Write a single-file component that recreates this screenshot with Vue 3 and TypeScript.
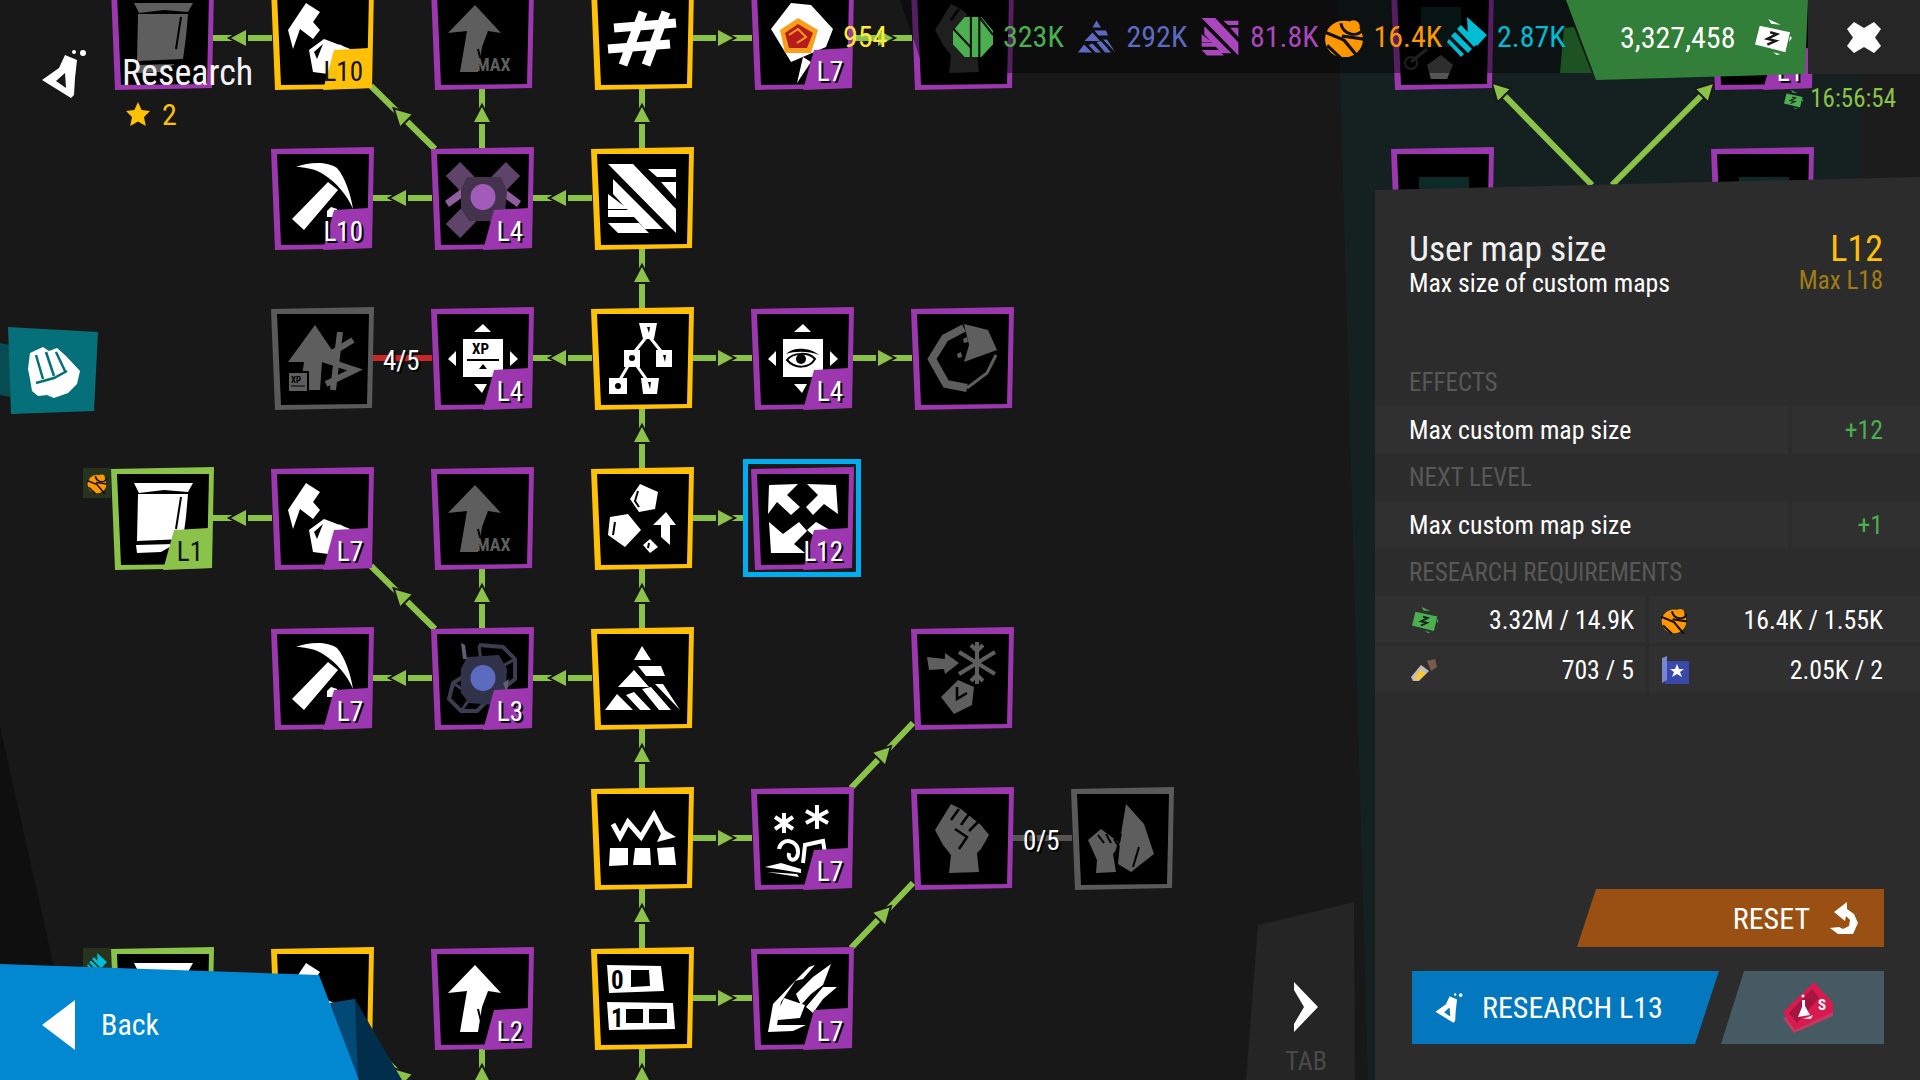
<template>
  <div class="screen">
    <div class="wedge"></div>
    <div class="teal"></div>
    <div class="side"></div>

    <!-- research tree -->
    <svg class="edges" viewBox="0 0 1920 1130" width="1920" height="1130">
      <g v-for="(e, i) in edges" :key="i">
        <line :x1="e.x1" :y1="e.y1" :x2="e.x2" :y2="e.y2" :stroke="e.color" stroke-width="6" />
        <template v-if="e.head">
          <polygon :points="e.head" fill="#181818" stroke="#181818" stroke-width="4" />
          <polygon :points="e.head" fill="#8bc34a" />
        </template>
      </g>
    </svg>
    <div
      v-for="n in nodes"
      :key="n.c + '-' + n.r"
      class="node"
      :class="{ selected: n.sel }"
      :style="{ left: 111 + n.c * 160 + 'px', top: -13 + n.r * 160 + 'px' }"
    >
      <svg viewBox="0 0 103 103" width="103" height="103">
        <polygon points="0,2 103,0 101,101 4,103" :fill="tones[n.tone]" />
        <polygon points="6,7 98,7 96,97 10,98" fill="#000" />
        <Glyph :name="n.icon" :color="n.fg || '#fff'" />
        <polygon v-if="n.lvl" points="63,63 98,61 101,101 52,103" :fill="tones[n.tone]" />
      </svg>
      <span v-if="n.lvl" class="lvl" :class="{ dark: n.tone === 'yellow' || n.tone === 'green' }">{{ n.lvl }}</span>
    </div>
    <span class="link-count count-a">4/5</span>
    <span class="link-count count-b">0/5</span>
    <div class="mini mini-a">
      <svg viewBox="0 0 38 38" width="20" height="22"><Glyph name="sOrange" color="#ff9800" /></svg>
    </div>
    <div class="mini mini-b">
      <svg viewBox="0 0 40 40" width="20" height="22"><Glyph name="sCyan" color="#00bcd4" /></svg>
    </div>

    <!-- left side -->
    <div class="title-block">
      <svg viewBox="0 0 48 52" width="48" height="52"><Glyph name="flask" color="#fff" /></svg>
      <div class="title-text">
        <div class="title">Research</div>
        <div class="stars">
          <svg viewBox="0 0 24 24" width="26" height="24"><path fill="#ffc107" d="M12 0l3.600 8 8.400 1-6 6 1.800 9L12 19.500 4.200 24 6 15 0 9l8.400-1z" /></svg>
          <span>2</span>
        </div>
      </div>
    </div>
    <svg class="group-tab" viewBox="0 0 100 90" width="100" height="90">
      <polygon points="0,16 10,18 10,70 0,68" fill="#074c52" />
      <polygon points="8,0 98,5 94,84 11,87" fill="#06707a" />
      <path fill="#fff" d="M30 26l13-6 6 4 8-3 9 8 14 15-3 13-9 9-14 5-7-3-9 1-6-5-2-12-2-10z" />
      <path fill="none" stroke="#06707a" stroke-width="2.500" d="M36 28l7 24M46 25l8 24M56 25l9 19M36 56l18-5 13-7" />
    </svg>
    <div class="back">
      <svg class="back-bg" viewBox="0 0 402 116" width="402" height="116">
        <polygon points="330,39 355,35 402,116 360,116" fill="#012f4b" />
        <polygon points="330,39 355,35 358,116 345,116" fill="#024a75" />
        <polygon points="0,0 319,11 359,116 0,116" fill="#0288d1" />
      </svg>
      <svg class="back-arrow" viewBox="0 0 33 50" width="33" height="50"><polygon points="33,0 0,25 33,50" fill="#fff" /></svg>
      <span>Back</span>
    </div>
    <div class="tab">
      <svg viewBox="0 0 24 50" width="24" height="50"><polygon points="0,0 24,25 0,50 0,42 10,25 0,8" fill="#fff" /></svg>
      <span>TAB</span>
    </div>

    <!-- top bar -->
    <div class="bar-bg"></div>
    <div class="flag-shadow"></div>
    <div class="topbar">
      <span class="gold">954</span>
      <div v-for="s in stats" :key="s.value" class="stat" :style="{ color: s.color }">
        <svg :viewBox="s.box" width="40" height="40"><Glyph :name="s.icon" :color="s.color" /></svg>
        <span>{{ s.value }}</span>
      </div>
    </div>
    <div class="flag">
      <span>3,327,458</span>
      <svg viewBox="0 0 40 38" width="38" height="36"><Glyph name="bills" color="#fff" /></svg>
    </div>
    <div class="close">
      <svg viewBox="0 0 34 31" width="34" height="31"><polygon points="7,0 17,6 27,0 34,7 28,15.500 34,24 27,31 17,25 7,31 0,24 6,15.500 0,7" fill="#fff" /></svg>
    </div>
    <div class="timer">
      <svg viewBox="0 0 40 38" width="21" height="19"><Glyph name="bills" color="#4caf50" /></svg>
      <span>16:56:54</span>
    </div>

    <!-- details panel -->
    <aside class="panel">
      <header class="head">
        <div>
          <div class="name">User map size</div>
          <div class="desc">Max size of custom maps</div>
        </div>
        <div class="levels">
          <div class="cur">L12</div>
          <div class="max">Max L18</div>
        </div>
      </header>
      <div class="section first">EFFECTS</div>
      <div class="row"><div class="cell">Max custom map size</div><div class="cell val">+12</div></div>
      <div class="section">NEXT LEVEL</div>
      <div class="row"><div class="cell">Max custom map size</div><div class="cell val">+1</div></div>
      <div class="section">RESEARCH REQUIREMENTS</div>
      <div class="req">
        <div class="req-cell">
          <svg viewBox="0 0 40 38" width="28" height="26"><Glyph name="bills" color="#4caf50" /></svg>
          <span>3.32M / 14.9K</span>
        </div>
        <div class="req-cell right">
          <svg viewBox="0 0 38 38" width="26" height="28"><Glyph name="sOrange" color="#ff9800" /></svg>
          <span>16.4K / 1.55K</span>
        </div>
        <div class="req-cell">
          <svg viewBox="0 0 26 26" width="26" height="26"><Glyph name="vial" color="#ffca28" /></svg>
          <span>703 / 5</span>
        </div>
        <div class="req-cell right">
          <svg viewBox="0 0 28 28" width="28" height="28"><Glyph name="chart" color="#3949ab" /></svg>
          <span>2.05K / 2</span>
        </div>
      </div>
      <div class="actions">
        <button class="reset">
          <span>RESET</span>
          <svg viewBox="0 0 28 32" width="28" height="32"><path fill="#fff" d="M4 10L17 0v7l7 5 4 9-5 11H8L0 26l9-1 4 2 6-3 1-6-4-4-1 5z" /></svg>
        </button>
        <div class="action-row">
          <button class="research">
            <svg viewBox="0 0 48 52" width="30" height="32"><Glyph name="flask" color="#fff" /></svg>
            <span>RESEARCH L13</span>
          </button>
          <button class="ticket">
            <svg viewBox="0 0 52 52" width="52" height="52"><Glyph name="ticket" color="#d81b4f" /></svg>
          </button>
        </div>
      </div>
    </aside>
  </div>
</template>

<script setup lang="ts">
import { h } from "vue";

type Shape = {
  d?: string;
  fill?: string;
  stroke?: string;
  w?: number;
  even?: boolean;
  text?: string;
  x?: number;
  y?: number;
  size?: number;
};

type TreeNode = {
  c: number;
  r: number;
  tone: "purple" | "yellow" | "green" | "gray";
  icon: string;
  lvl?: string;
  fg?: string;
  sel?: boolean;
};

const BLACK = "#000";
const GRAY = "#5e5e5e";

const poly = (...list: string[]) =>
  list.map((s) => "M" + s.trim().split(" ").join("L") + "Z").join("");
const oval = (x: number, y: number, rx: number, ry = rx) =>
  `M${x - rx} ${y}a${rx} ${ry} 0 1 0 ${rx * 2} 0a${rx} ${ry} 0 1 0 ${-rx * 2} 0Z`;

const card = poly(
  "52,17 60,25 43,25",
  "32,32 72,32 72,70 32,70",
  "25,44 17,52 25,59",
  "79,44 87,52 79,59",
  "43,77 56,77 51,86"
);
const upArrow = poly("44,18 70,46 57,44 51,60 47,85 29,85 36,44 17,46");

const icons: Record<string, Shape[]> = {
  scroll: [
    { d: poly("23,16 82,16 77,25 53,23 28,26", "27,27 77,27 75,50 72,72 26,74", "25,78 64,77 50,85 26,86") },
    { d: "M70 30L65 62", stroke: BLACK, w: 2 },
  ],
  hammer: [
    { d: poly("35,16 49,25 42,35 49,43 42,52 29,42 22,62 17,43", "38,63 53,52 82,63 80,90 42,85", "68,57 78,62 72,62") },
    { d: poly("43,65 52,57 46,72"), fill: BLACK },
  ],
  pick: [
    { d: "M25 20C38 15 56 14 66 21C74 30 80 48 82 62C76 48 66 36 52 27C44 22 34 20 25 20Z" },
    { d: poly("57,35 67,43 33,83 21,72", "56,64 60,60 66,62 66,70 56,70") },
  ],
  arrow: [
    { d: upArrow },
    { d: "M47 62L50 74", stroke: BLACK, w: 2 },
    { text: "MAX", x: 45, y: 84, size: 18 },
  ],
  arrowUp: [{ d: upArrow }, { d: "M47 62L50 74", stroke: BLACK, w: 2 }],
  hash: [{ d: "M23 41L85 36M17 62L79 57M52 25L32 78M75 25L55 78", stroke: "fg", w: 9 }],
  stripes: [
    {
      d: poly(
        "17,17 42,17 85,62 85,86",
        "22,32 72,82 54,82 22,47",
        "57,22 85,22 85,30 66,30",
        "70,35 85,35 85,52",
        "17,47 37,62 17,62",
        "17,63 39,63 46,70 17,70",
        "17,76 48,76 58,86 27,86"
      ),
    },
  ],
  xp: [
    { d: card },
    { text: "XP", x: 41, y: 47, size: 15, fill: BLACK },
    { d: "M36 53H68", stroke: BLACK, w: 2 },
    { d: poly("52,57 56,62 48,62"), fill: BLACK },
  ],
  eye: [
    { d: card },
    { d: "M35 47C42 40 58 40 68 48C58 44 44 44 35 47Z", fill: BLACK },
    { d: "M36 53C42 45 58 45 64 52C58 62 44 62 36 53Z", stroke: BLACK, w: 2 },
    { d: oval(50, 52, 5), fill: BLACK },
  ],
  tree: [
    { d: "M57 28L41 48M57 28L73 48M41 52L27 76M41 52L58 76", stroke: "fg", w: 3 },
    {
      d: poly(
        "48,16 66,16 63,32 52,32",
        "33,43 49,43 49,60 33,60",
        "65,43 81,43 81,60 65,60",
        "18,71 36,71 36,87 18,87",
        "50,71 68,71 66,87 52,87"
      ),
    },
    { d: oval(41, 51, 3) + oval(27, 79, 3) + poly("56,20 59,20 58,26", "72,48 75,48 74,55", "57,75 60,75 59,82"), fill: BLACK },
  ],
  pacman: [
    { d: "M53 21L34 31L21 52L35 77L56 81", stroke: "fg", w: 8 },
    { d: "M56 81L76 66L85 48", stroke: "fg", w: 3 },
    { d: poly("53,17 77,23 86,43 53,55 58,38") },
    { d: poly("52,32 56,30 57,35 53,36", "46,47 50,45 51,50 47,51"), fill: GRAY },
  ],
  rocks: [
    { d: poly("49,17 67,25 64,42 48,45 39,32", "19,50 37,47 50,63 34,80 17,68", "59,72 67,80 59,86 52,78", "75,45 85,58 79,58 79,78 70,70 70,58 62,58") },
    { d: "M47 24L44 34L48 40M24 55L22 68M58 76L57 81", stroke: BLACK, w: 2 },
  ],
  expand: [
    {
      d: poly(
        "18,18 47,17 36,28 49,40 40,48 26,35 17,47",
        "56,17 85,18 87,47 73,37 62,48 55,40 67,28",
        "18,55 32,67 48,55 56,64 43,77 54,86 20,86",
        "56,63 65,55 79,63 70,75"
      ),
    },
  ],
  tower: [
    {
      d: poly(
        "51,19 60,33 43,33",
        "47,39 70,39 74,49 55,49",
        "43,43 58,60 27,60",
        "26,67 42,83 14,83",
        "35,68 43,65 60,83 49,83",
        "51,62 60,60 80,83 68,83",
        "64,57 72,57 89,83"
      ),
    },
  ],
  snow: [
    { d: poly("16,30 34,32 34,26 48,36 34,47 33,42 18,43", "47,53 63,60 61,78 43,87 30,70") },
    { d: "M66 15V57M48 25L84 47M48 47L84 25M60 18L66 24L72 18M60 54L66 48L72 54", stroke: "fg", w: 4 },
    { d: "M46 60V72L56 66", stroke: BLACK, w: 2.500 },
  ],
  fist: [
    { d: poly("24,43 40,17 50,22 60,30 70,38 78,48 70,62 66,66 68,85 38,86 40,68 32,58") },
    { d: "M40 33L48 22M50 38L58 27M58 44L68 34M44 42L56 50L48 62", stroke: BLACK, w: 2.500 },
  ],
  flame: [
    { d: poly("55,17 73,37 83,67 60,85 47,77 50,47", "17,53 30,42 50,57 42,67 45,85 25,86 26,73") },
    { d: "M27 48L33 56M35 47L40 56M43 52L48 60M50 47L44 70M68 60L62 80", stroke: BLACK, w: 2 },
  ],
  xpTrade: [
    { d: poly("44,18 69,55 51,55 49,83 29,83 33,55 17,55") },
    { d: "M69 25L62 83M82 33L51 52L84 63L55 77", stroke: "fg", w: 6 },
    { d: poly("15,64 38,64 38,86 15,86"), fill: BLACK },
    { d: poly("18,66 36,66 36,84 18,84") },
    { text: "XP", x: 20, y: 76, size: 9, fill: BLACK },
    { d: "M20 79H34", stroke: BLACK, w: 1 },
  ],
  crown: [
    { d: "M22 37L29 50L37 35L50 50L63 28L73 47", stroke: "fg", w: 5 },
    { d: poly("72,42 85,50 66,55", "19,61 37,61 37,78 18,79", "44,61 59,61 60,78 42,78", "66,61 83,60 85,78 68,78") },
  ],
  wind: [
    { d: "M33 26V46M24 30L42 42M24 42L42 30M66 18V42M55 24L77 36M55 36L77 24", stroke: "fg", w: 4 },
    { d: "M28 62C30 50 48 52 47 66C46 76 36 74 38 66M52 76L54 58L72 54L74 66", stroke: "fg", w: 4 },
    { d: poly("14,80 30,76 50,82 50,86", "16,85 46,87 48,90") },
  ],
  numbers: [
    { d: poly("16,18 70,19 73,44 18,46", "16,55 82,56 84,82 18,83") },
    { text: "0", x: 20, y: 42, size: 25, fill: BLACK },
    { text: "1", x: 20, y: 80, size: 25, fill: BLACK },
    { d: poly("40,23 58,23 59,39 40,40", "35,62 52,62 52,76 35,76", "58,62 76,62 76,76 58,76"), fill: BLACK },
  ],
  claw: [
    {
      d: poly(
        "17,85 22,57 45,33 30,55 26,78 55,78 42,84",
        "33,51 54,58 49,71 27,73 29,60",
        "45,47 62,30 80,17 72,38 60,47 50,58",
        "55,60 72,40 86,40 72,52 62,66",
        "44,34 58,20 64,18 52,32"
      ),
    },
  ],
  devicePurple: [
    { d: "M22 22L82 84M82 22L22 84", stroke: "#5d4468", w: 20 },
    { d: poly("14,54 30,42 32,50 18,60", "90,54 74,42 72,50 86,60"), fill: "#8e5e9e" },
    { d: poly("36,30 70,30 76,44 74,66 66,74 38,74 30,62 30,42"), fill: "#44324f" },
    { d: oval(52, 50, 12.500, 13), fill: "#a05cb8" },
  ],
  deviceBlue: [
    { d: "M48 18L72 20L84 32L84 52L72 62M38 46L22 56L18 72L30 84L46 84L56 74", stroke: "#3a3d50", w: 4 },
    { d: "M48 18L50 36M84 32L70 40M22 56L34 64M30 84L40 70", stroke: "#3a3d50", w: 3 },
    { d: poly("36,30 68,28 76,42 74,70 64,78 38,76 30,66 30,42"), fill: "#30334a" },
    { d: poly("30,16 34,18 36,32 32,32", "72,56 78,52 76,66"), fill: "#5a6078" },
    { d: oval(52, 51, 12.500, 13), fill: "#5c6bc0" },
  ],
  flameRock: [
    { d: poly("40,16 60,18 82,42 75,60 40,75 20,42", "52,70 60,75 46,96") },
    { d: poly("47,31 67,43 60,66 34,66 29,43"), fill: "#f9a01b" },
    { d: poly("47,37 62,46 56,61 38,61 34,46"), fill: "#b71c1c" },
    { d: "M38 48L47 42L55 50L46 56", stroke: "#f9a01b", w: 2 },
  ],
  branch: [
    { d: "M20 75L36 62", stroke: "#3a3a3a", w: 3 },
    { d: oval(20, 76, 6), stroke: "#3a3a3a", w: 2 },
    { d: poly("36,78 50,68 62,78 56,92 40,92"), fill: "#555" },
    { d: "M30 20H70V60H30Z", fill: "#0c2624" },
  ],
  teal: [{ d: "M28 30H78V90H28Z", fill: "#0c2a28" }],
  sGreen: [
    { d: poly("11,0 27,0 38,13 38,26 27,38 11,38 0,26 0,13") },
    { d: "M0 11L17 29M17 0V38M25 0V38M25 0L38 17", stroke: "#101010", w: 2 },
  ],
  sOrange: [
    { d: oval(19, 21, 18, 17.500) },
    { d: "M0 14L19 22L34 40M3 27L16 39M17 18L38 21", stroke: "#101010", w: 3 },
    { d: "M16 6C18 18 34 20 38 10", stroke: "#101010", w: 3 },
    { d: oval(28, 9, 6) },
  ],
  sCyan: [
    { d: poly("20,0 40,18 30,29 21,19", "14,8 31,26 27,30 10,12", "8,15 25,32 21,36 4,19", "2,22 17,37 14,40 0,25") },
  ],
  bills: [
    { d: poly("6,7 38,14 33,35 1,27", "15,0 28,6 18,5", "38,18 40,20 37,24", "20,35 28,37 24,38") },
    { d: "M17 14L24 16L14 21L23 23L14 27", stroke: "#181818", w: 2.500 },
  ],
  flask: [
    {
      d: poly("25,7 37,12 35,30 34,47 31,50 2,32 19,20", "16,33 26,40 25,25") + oval(43, 5, 3) + oval(34, 4, 2),
      even: true,
    },
  ],
  vial: [
    { d: poly("16,4 24,2 26,10 20,14"), fill: "#7b5a4c" },
    { d: poly("10,8 18,14 8,24 2,24 0,20"), fill: "#bdbdbd" },
    { d: poly("9,13 15,16 7,23 3,22"), fill: "#ffca28" },
  ],
  chart: [
    { d: "M4 5H28V28H4Z" },
    { d: "M1 2L6 0V24L1 27Z", fill: "#7986cb" },
    { d: poly("16,8 18,13 23,13 19,16 21,21 16,18 11,21 13,16 9,13 14,13"), fill: "#fff" },
  ],
  ticket: [
    { d: poly("11,51 0,36 50,20 50,34"), fill: "#c43a62" },
    { d: poly("0,30 31,0 50,21 50,30 12,48") },
    { d: poly("6,31 29,7 36,16 14,41"), fill: "#a5153f" },
    { d: poly("19,18 22,18 22,24 27,33 15,35 19,25") + oval(20, 14, 1.500), fill: "#fff" },
    { d: poly("20,37 30,33 28,37"), fill: "#ddd" },
    { text: "S", x: 35, y: 28, size: 15, fill: "#fff" },
  ],
};

// small functional component, draws one icon inside an svg
const Glyph = (props: { name: string; color: string }) =>
  h(
    "g",
    (icons[props.name] || []).map((s) => {
      if (s.text) {
        return h(
          "text",
          {
            x: s.x,
            y: s.y,
            fill: s.fill || props.color,
            "font-size": s.size,
            "font-weight": 700,
            "font-family": "Roboto, sans-serif",
          },
          s.text
        );
      }
      if (s.stroke) {
        return h("path", {
          d: s.d,
          fill: "none",
          stroke: s.stroke === "fg" ? props.color : s.stroke,
          "stroke-width": s.w,
        });
      }
      return h("path", {
        d: s.d,
        fill: s.fill || props.color,
        "fill-rule": s.even ? "evenodd" : "nonzero",
      });
    })
  );

const tones = { purple: "#9c37b0", yellow: "#ffc107", green: "#8bc34a", gray: "#5a5a5a" };

const nodes: TreeNode[] = [
  { c: 0, r: 0, tone: "purple", icon: "scroll", fg: GRAY },
  { c: 1, r: 0, tone: "yellow", icon: "hammer", lvl: "L10" },
  { c: 2, r: 0, tone: "purple", icon: "arrow", fg: GRAY },
  { c: 3, r: 0, tone: "yellow", icon: "hash" },
  { c: 4, r: 0, tone: "purple", icon: "flameRock", lvl: "L7" },
  { c: 5, r: 0, tone: "purple", icon: "fist", fg: "#3a3a3a" },
  { c: 8, r: 0, tone: "purple", icon: "branch" },
  { c: 10, r: 0, tone: "purple", icon: "scroll", lvl: "L1" },
  { c: 8, r: 1, tone: "purple", icon: "teal" },
  { c: 10, r: 1, tone: "purple", icon: "teal" },
  { c: 1, r: 1, tone: "purple", icon: "pick", lvl: "L10" },
  { c: 2, r: 1, tone: "purple", icon: "devicePurple", lvl: "L4" },
  { c: 3, r: 1, tone: "yellow", icon: "stripes" },
  { c: 1, r: 2, tone: "gray", icon: "xpTrade", fg: GRAY },
  { c: 2, r: 2, tone: "purple", icon: "xp", lvl: "L4" },
  { c: 3, r: 2, tone: "yellow", icon: "tree" },
  { c: 4, r: 2, tone: "purple", icon: "eye", lvl: "L4" },
  { c: 5, r: 2, tone: "purple", icon: "pacman", fg: GRAY },
  { c: 0, r: 3, tone: "green", icon: "scroll", lvl: "L1" },
  { c: 1, r: 3, tone: "purple", icon: "hammer", lvl: "L7" },
  { c: 2, r: 3, tone: "purple", icon: "arrow", fg: GRAY },
  { c: 3, r: 3, tone: "yellow", icon: "rocks" },
  { c: 4, r: 3, tone: "purple", icon: "expand", lvl: "L12", sel: true },
  { c: 1, r: 4, tone: "purple", icon: "pick", lvl: "L7" },
  { c: 2, r: 4, tone: "purple", icon: "deviceBlue", lvl: "L3" },
  { c: 3, r: 4, tone: "yellow", icon: "tower" },
  { c: 5, r: 4, tone: "purple", icon: "snow", fg: GRAY },
  { c: 3, r: 5, tone: "yellow", icon: "crown" },
  { c: 4, r: 5, tone: "purple", icon: "wind", lvl: "L7" },
  { c: 5, r: 5, tone: "purple", icon: "fist", fg: GRAY },
  { c: 6, r: 5, tone: "gray", icon: "flame", fg: GRAY },
  { c: 0, r: 6, tone: "green", icon: "scroll" },
  { c: 1, r: 6, tone: "yellow", icon: "hammer" },
  { c: 2, r: 6, tone: "purple", icon: "arrowUp", lvl: "L2" },
  { c: 3, r: 6, tone: "yellow", icon: "numbers" },
  { c: 4, r: 6, tone: "purple", icon: "claw", lvl: "L7" },
];

const GREEN = "#8bc34a";
const cx = (c: number) => 162 + c * 160;
const cy = (r: number) => 38 + r * 160;
const left = (c: number) => 111 + c * 160;
const top = (r: number) => -13 + r * 160;

const link = (x1: number, y1: number, x2: number, y2: number, t = 0.5, color = GREEN) => {
  const len = Math.hypot(x2 - x1, y2 - y1);
  const ux = (x2 - x1) / len;
  const uy = (y2 - y1) / len;
  const mx = x1 + (x2 - x1) * t;
  const my = y1 + (y2 - y1) * t;
  const bx = mx - ux * 4;
  const by = my - uy * 4;
  const head =
    t > 0
      ? [
          [bx - uy * 8, by + ux * 8],
          [mx + ux * 11, my + uy * 11],
          [bx + uy * 8, by - ux * 8],
        ]
          .map((p) => p.join(","))
          .join(" ")
      : "";
  return { x1, y1, x2, y2, color, head };
};
// horizontal link on row r, between two neighbour columns
const across = (r: number, a: number, b: number) =>
  a < b ? link(cx(a) + 50, cy(r), cx(b) - 50, cy(r)) : link(cx(a) - 50, cy(r), cx(b) + 50, cy(r));
const upward = (c: number, r: number) => link(cx(c), top(r) + 1, cx(c), top(r - 1) + 101);
const diagLeft = (c: number, r: number) =>
  link(left(c) + 4, top(r) + 2, left(c - 1) + 100, top(r - 1) + 99);
const diagRight = (c: number, r: number) =>
  link(left(c) + 100, top(r) + 1, left(c + 1) + 2, top(r - 1) + 96);

const edges = [
  across(0, 1, 0),
  across(0, 3, 4),
  across(0, 4, 5),
  upward(3, 1),
  upward(2, 1),
  diagLeft(2, 1),
  across(1, 2, 1),
  across(1, 3, 2),
  upward(3, 2),
  link(cx(1) + 50, cy(2), cx(2) - 50, cy(2), 0, "#c62828"),
  across(2, 3, 2),
  across(2, 3, 4),
  across(2, 4, 5),
  upward(3, 3),
  across(3, 1, 0),
  across(3, 3, 4),
  upward(3, 4),
  upward(2, 4),
  diagLeft(2, 4),
  across(4, 2, 1),
  across(4, 3, 2),
  upward(3, 5),
  across(5, 3, 4),
  diagRight(4, 5),
  link(cx(5) + 50, cy(5), cx(6) - 50, cy(5), 0, "#555"),
  upward(3, 6),
  across(6, 3, 4),
  diagRight(4, 6),
  upward(2, 7),
  upward(3, 7),
  diagLeft(2, 7),
  link(1592, 185, 1494, 85, 0.93),
  link(1612, 185, 1712, 85, 0.93),
];

const stats = [
  { icon: "sGreen", box: "0 0 38 38", value: "323K", color: "#4caf50" },
  { icon: "tower", box: "12 16 80 72", value: "292K", color: "#5c6bc0" },
  { icon: "stripes", box: "15 15 72 74", value: "81.8K", color: "#ab47bc" },
  { icon: "sOrange", box: "0 0 38 38", value: "16.4K", color: "#ff9800" },
  { icon: "sCyan", box: "0 0 40 40", value: "2.87K", color: "#00bcd4" },
];
</script>

<style>
html,
body {
  margin: 0;
  background: #181818;
}
</style>

<style scoped>
.screen {
  position: relative;
  width: 1920px;
  height: 1080px;
  overflow: hidden;
  background: #181818;
  color: #fff;
  font-family: "Roboto Condensed", Roboto, "Liberation Sans", sans-serif;
  font-stretch: 85%;
  font-weight: 400;
}
.wedge {
  position: absolute;
  left: 0;
  top: 727px;
  width: 60px;
  height: 353px;
  background: #0f0f0f;
  clip-path: polygon(0 0, 54px 240px, 100% 100%, 0 100%);
}
.teal {
  position: absolute;
  left: 1338px;
  top: 0;
  width: 522px;
  height: 1080px;
  background: #152120;
  clip-path: polygon(0 0, 100% 0, 100% 100%, 30px 100%);
}
.side {
  position: absolute;
  left: 1860px;
  top: 0;
  width: 60px;
  height: 1080px;
  background: #1c1c1c;
}
.edges {
  position: absolute;
  left: 0;
  top: 0;
}
.node {
  position: absolute;
  width: 103px;
  height: 103px;
}
.node svg {
  display: block;
}
.node.selected::before {
  content: "";
  position: absolute;
  left: -8px;
  top: -8px;
  width: 108px;
  height: 108px;
  border: 5px solid #00aeef;
  outline: 2px solid #1c1c1c;
  outline-offset: -7px;
  background: #181818;
}
.node.selected svg {
  position: relative;
}
.lvl {
  position: absolute;
  right: 11px;
  top: 70px;
  font-size: 27px;
  line-height: 30px;
  text-shadow: 2px 2px 0 #000;
}
.lvl.dark {
  color: #111;
  text-shadow: none;
}
.link-count {
  position: absolute;
  font-size: 27px;
  line-height: 30px;
  text-shadow: 2px 2px 1px #000;
}
.count-a {
  left: 383px;
  top: 346px;
}
.count-b {
  left: 1023px;
  top: 826px;
}
.mini {
  position: absolute;
  left: 83px;
  width: 28px;
  height: 30px;
  background: #27331f;
  display: flex;
  align-items: center;
  justify-content: center;
}
.mini-a {
  top: 468px;
}
.mini-b {
  top: 948px;
}
.title-block {
  position: absolute;
  left: 40px;
  top: 48px;
  display: flex;
  gap: 34px;
}
.title-text {
  padding-top: 5px;
}
.title {
  font-size: 36px;
  line-height: 40px;
  color: #f2f2f2;
}
.stars {
  display: flex;
  align-items: center;
  gap: 11px;
  margin: 7px 0 0 3px;
  height: 28px;
  color: #ffc107;
  font-size: 30px;
}
.group-tab {
  position: absolute;
  left: 0;
  top: 327px;
}
.back {
  position: absolute;
  left: 0;
  top: 964px;
  width: 402px;
  height: 116px;
  display: flex;
  align-items: center;
  gap: 26px;
  padding: 5px 0 0 42px;
  box-sizing: border-box;
  font-size: 30px;
}
.back-bg {
  position: absolute;
  left: 0;
  top: 0;
}
.back-arrow,
.back span {
  position: relative;
}
.tab {
  position: absolute;
  left: 1246px;
  top: 902px;
  width: 122px;
  height: 178px;
  box-sizing: border-box;
  padding: 80px 2px 0 0;
  background: #252525;
  clip-path: polygon(12px 23px, 108px 0, 109px 100%, 0 100%);
  display: flex;
  flex-direction: column;
  align-items: center;
  gap: 15px;
  color: #4a4a4a;
  font-size: 26px;
  line-height: 28px;
}
.bar-bg {
  position: absolute;
  left: 900px;
  top: 0;
  width: 700px;
  height: 73px;
  background: rgba(0, 0, 0, 0.45);
  clip-path: polygon(0 0, 100% 0, 100% 100%, 25px 100%);
}
.flag-shadow {
  position: absolute;
  left: 1560px;
  top: 27px;
  width: 32px;
  height: 46px;
  background: #1d5323;
  clip-path: polygon(4px 1px, 14px 0, 100% 100%, 0 100%);
}
.topbar {
  position: absolute;
  left: 843px;
  top: 0;
  height: 73px;
  display: flex;
  align-items: center;
  font-size: 30px;
}
.gold {
  width: 110px;
  color: #ffeb3b;
}
.stat {
  width: 123.5px;
  display: flex;
  align-items: center;
  gap: 10px;
}
.flag {
  position: absolute;
  left: 1566px;
  top: 0;
  width: 242px;
  height: 80px;
  box-sizing: border-box;
  padding: 0 0 6px 54px;
  background: #317f38;
  clip-path: polygon(0 0, 100% 0, 239px 74px, 30px 100%);
  display: flex;
  align-items: center;
  gap: 19px;
  font-size: 30px;
}
.close {
  position: absolute;
  left: 1808px;
  top: 0;
  width: 112px;
  height: 74px;
  background: #262626;
  display: flex;
  align-items: center;
  justify-content: center;
}
.timer {
  position: absolute;
  right: 24px;
  top: 84px;
  display: flex;
  align-items: center;
  gap: 6px;
  color: #8bc34a;
  font-size: 25px;
  line-height: 30px;
}
.panel {
  position: absolute;
  left: 1375px;
  top: 177px;
  width: 545px;
  height: 903px;
  background: #2c2c2c;
  clip-path: polygon(0 13px, 100% 0, 100% 100%, 0 100%);
  display: flex;
  flex-direction: column;
  font-size: 25.800px;
}
.head {
  display: flex;
  justify-content: space-between;
  padding: 52px 37px 0 34px;
  height: 68px;
}
.name {
  font-size: 35.500px;
  line-height: 40px;
  color: #f0f0f0;
}
.desc {
  line-height: 28px;
}
.levels {
  text-align: right;
}
.cur {
  font-size: 36px;
  line-height: 40px;
  color: #ffc107;
}
.max {
  font-size: 25px;
  line-height: 24px;
  color: #a07d14;
}
.section {
  height: 47px;
  line-height: 47px;
  padding-left: 34px;
  color: #585858;
  font-size: 25px;
}
.section.first {
  margin-top: 62px;
}
.row {
  display: flex;
  gap: 4px;
  height: 48px;
}
.cell {
  flex: 1;
  background: #303030;
  line-height: 48px;
  padding-left: 34px;
}
.cell.val {
  flex: 0 0 128px;
  box-sizing: border-box;
  padding: 0 37px 0 0;
  text-align: right;
  color: #4caf50;
}
.req {
  display: grid;
  grid-template-columns: 271px 1fr;
  gap: 3px;
  grid-auto-rows: 47px;
}
.req-cell {
  display: flex;
  align-items: center;
  justify-content: space-between;
  padding: 0 12px 0 36px;
  background: #303030;
}
.req-cell.right {
  padding: 0 37px 0 12px;
}
.actions {
  margin-top: auto;
  padding: 0 36px 36px 0;
  display: flex;
  flex-direction: column;
  align-items: flex-end;
  gap: 24px;
}
button {
  border: 0;
  color: #fff;
  font: inherit;
  display: flex;
  align-items: center;
  padding: 0;
}
.reset {
  width: 307px;
  height: 58px;
  background: #9a5012;
  clip-path: polygon(19px 0, 100% 0, 100% 100%, 0 100%);
  justify-content: flex-end;
  gap: 20px;
  padding-right: 26px;
  font-size: 30px;
}
.action-row {
  display: flex;
  gap: 2px;
}
.research {
  width: 307px;
  height: 73px;
  background: #0478bf;
  clip-path: polygon(0 0, 100% 0, calc(100% - 24px) 100%, 0 100%);
  gap: 18px;
  padding-left: 22px;
  font-size: 30px;
}
.ticket {
  width: 163px;
  height: 73px;
  background: #465a64;
  clip-path: polygon(23px 0, 100% 0, 100% 100%, 0 100%);
  justify-content: center;
  padding-left: 12px;
}
</style>
